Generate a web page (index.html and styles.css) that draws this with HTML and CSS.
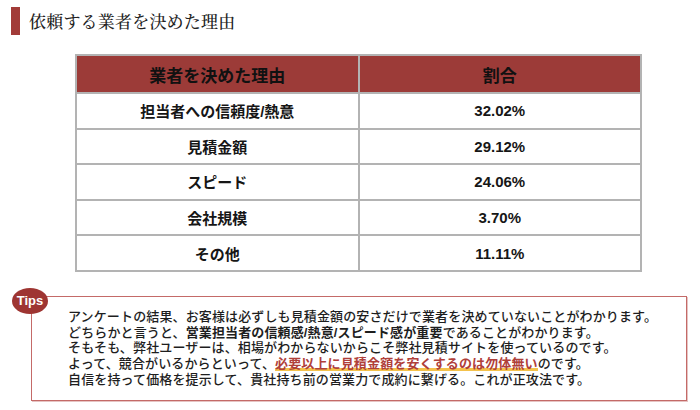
FILE: index.html
```html
<!DOCTYPE html>
<html lang="ja">
<head>
<meta charset="utf-8">
<link rel="stylesheet" href="styles.css">
</head>
<body>
<div class="title">
  <span class="title-bar"></span>
  <h1 class="title-text">依頼する業者を決めた理由</h1>
</div>
<table class="reasons">
  <thead>
    <tr><th>業者を決めた理由</th><th>割合</th></tr>
  </thead>
  <tbody>
    <tr><td>担当者への信頼度/熱意</td><td>32.02%</td></tr>
    <tr><td>見積金額</td><td>29.12%</td></tr>
    <tr><td>スピード</td><td>24.06%</td></tr>
    <tr><td>会社規模</td><td>3.70%</td></tr>
    <tr><td>その他</td><td>11.11%</td></tr>
  </tbody>
</table>
<div class="tips">
  <span class="tips-badge">Tips</span>
  <p class="tips-text">アンケートの結果、お客様は必ずしも見積金額の安さだけで業者を決めていないことがわかります。<br>どちらかと言うと、<b>営業担当者の信頼感/熱意/スピード感が重要</b>であることがわかります。<br>そもそも、弊社ユーザーは、相場がわからないからこそ弊社見積サイトを使っているのです。<br>よって、競合がいるからといって、<b class="marker">必要以上に見積金額を安くするのは勿体無い</b>のです。<br>自信を持って価格を提示して、貴社持ち前の営業力で成約に繋げる。これが正攻法です。</p>
</div>
</body>
</html>
```

FILE: styles.css
```css
html, body {
  margin: 0;
  padding: 0;
  background: #ffffff;
}
body {
  width: 700px;
  height: 410px;
  overflow: hidden;
  font-family: "Liberation Sans", "Noto Sans CJK JP", sans-serif;
  color: #1e1e1e;
}
.title {
  display: flex;
  align-items: center;
  gap: 9px;
  padding: 7px 0 0 11px;
  height: 28px;
}
.title-bar {
  width: 9px;
  height: 28px;
  background: #a23b38;
}
.title-text {
  margin: 0;
  font-family: "Noto Serif CJK JP", "Noto Sans CJK JP", serif;
  font-weight: 500;
  font-size: 17px;
  letter-spacing: 0.2px;
  line-height: 28px;
  color: #222;
}
.reasons {
  margin: 19px 0 0 75px;
  width: 567px;
  border-collapse: collapse;
  border: 2px solid #b3b3b3;
  table-layout: fixed;
}
.reasons th,
.reasons td {
  border: 2px solid #b3b3b3;
  text-align: center;
  font-weight: 700;
  padding: 0;
}
.reasons th {
  background: #9c3b38;
  color: #111;
  font-size: 17px;
  height: 36px;
}
.reasons td {
  font-size: 15px;
  height: 33.6px;
  color: #161616;
}
.tips {
  position: relative;
  margin: 24px 0 0 31px;
  width: 656px;
  height: 105px;
  border: 1px solid #c46a68;
  box-shadow: 1px 1px 0 #e6c4c3;
  box-sizing: border-box;
}
.tips-badge {
  position: absolute;
  left: -20px;
  top: -9px;
  width: 36px;
  height: 26px;
  border-radius: 50%;
  background: #9e3532;
  color: #fff;
  font-weight: 700;
  font-size: 13px;
  line-height: 26px;
  text-align: center;
}
.tips-text {
  margin: 0;
  padding: 12px 0 0 36px;
  font-family: "Liberation Sans", "Noto Sans CJK JP", sans-serif;
  font-weight: 500;
  font-size: 13px;
  letter-spacing: 0.13px;
  line-height: 15.7px;
  color: #1e1e1e;
}
.tips-text b {
  font-weight: 700;
}
.tips-text .marker {
  color: #b0403a;
  background: linear-gradient(transparent 82%, #f4c24c 82%, #f4c24c 100%);
}
```
